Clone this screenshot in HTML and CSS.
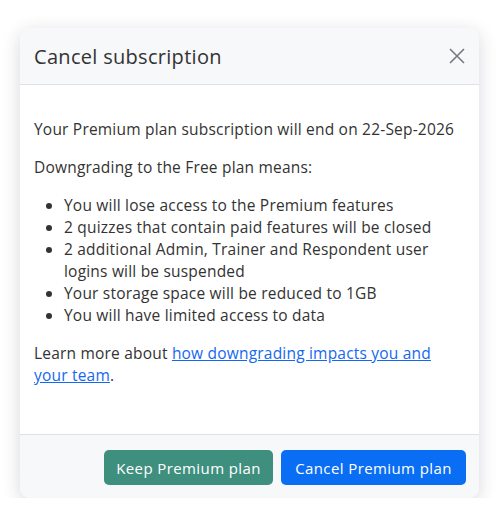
FILE: index.html
```html
<!DOCTYPE html>
<html lang="en">
<head>
    <meta charset="UTF-8">
    <meta name="viewport" content="width=device-width, initial-scale=1.0">
    <title>Cancel subscription</title>
    <link rel="stylesheet" href="styles.css">
</head>
<body>
<div class="modal">
    <div class="modal-header">
        <h1>Cancel subscription</h1>
        <button class="close" aria-label="Close">
            <svg width="16" height="16" viewBox="0 0 16 16"><path d="M1 1L15 15M15 1L1 15" stroke="#77797d" stroke-width="1.6" fill="none"/></svg>
        </button>
    </div>
    <div class="modal-body">
        <p>Your Premium plan subscription will end on 22-Sep-2026</p>
        <p>Downgrading to the Free plan means:</p>
        <ul>
            <li>You will lose access to the Premium features</li>
            <li>2 quizzes that contain paid features will be closed</li>
            <li>2 additional Admin, Trainer and Respondent user logins will be suspended</li>
            <li>Your storage space will be reduced to 1GB</li>
            <li>You will have limited access to data</li>
        </ul>
        <p>Learn more about <a href="#">how downgrading impacts you and your team</a>.</p>
    </div>
    <div class="modal-footer">
        <button class="btn btn-keep">Keep Premium plan</button>
        <button class="btn btn-cancel">Cancel Premium plan</button>
    </div>
</div>
</body>
</html>
```

FILE: styles.css
```css
* {
    box-sizing: border-box;
    margin: 0;
    padding: 0;
}
body {
    font-family: "Open Sans", "Liberation Sans", sans-serif;
    color: #333;
    background-color: #fff;
    padding: 28px 21px 0 20px;
}
.modal {
    width: 459px;
    background-color: #fff;
    border-radius: 10px;
    box-shadow: 0 4px 18px rgba(40, 40, 70, 0.18);
    overflow: hidden;
}
.modal-header {
    display: flex;
    align-items: center;
    justify-content: space-between;
    height: 57px;
    padding: 0 10px 0 14px;
    background-color: #f7f8fa;
    border-bottom: 1px solid #dee1e6;
}
.modal-header h1 {
    font-size: 20px;
    font-weight: 500;
    letter-spacing: 0.3px;
    color: #333;
}
.close {
    background: none;
    border: none;
    width: 24px;
    height: 24px;
    display: flex;
    align-items: center;
    justify-content: center;
    cursor: pointer;
}
.modal-body {
    padding: 33px 14px 48px;
    font-size: 15.5px;
    letter-spacing: 0.2px;
    line-height: 22px;
}
.modal-body p {
    margin-bottom: 16px;
}
.modal-body p:last-child {
    margin-bottom: 0;
}
.modal-body ul {
    padding-left: 30px;
    margin-bottom: 16px;
}
.modal-body a {
    color: #1468f0;
}
.modal-footer {
    display: flex;
    justify-content: flex-end;
    gap: 8px;
    padding: 15px 13px 13px;
    background-color: #f7f8fa;
    border-top: 1px solid #dee1e6;
}
.btn {
    height: 35px;
    padding: 0 10px;
    border: none;
    border-radius: 5px;
    font-family: inherit;
    font-size: 15px;
    font-weight: 500;
    letter-spacing: 0.4px;
    color: #fff;
    cursor: pointer;
}
.btn-keep {
    width: 169px;
    background-color: #3f8f7f;
}
.btn-cancel {
    width: 185px;
    background-color: #0a6ef5;
}
```
